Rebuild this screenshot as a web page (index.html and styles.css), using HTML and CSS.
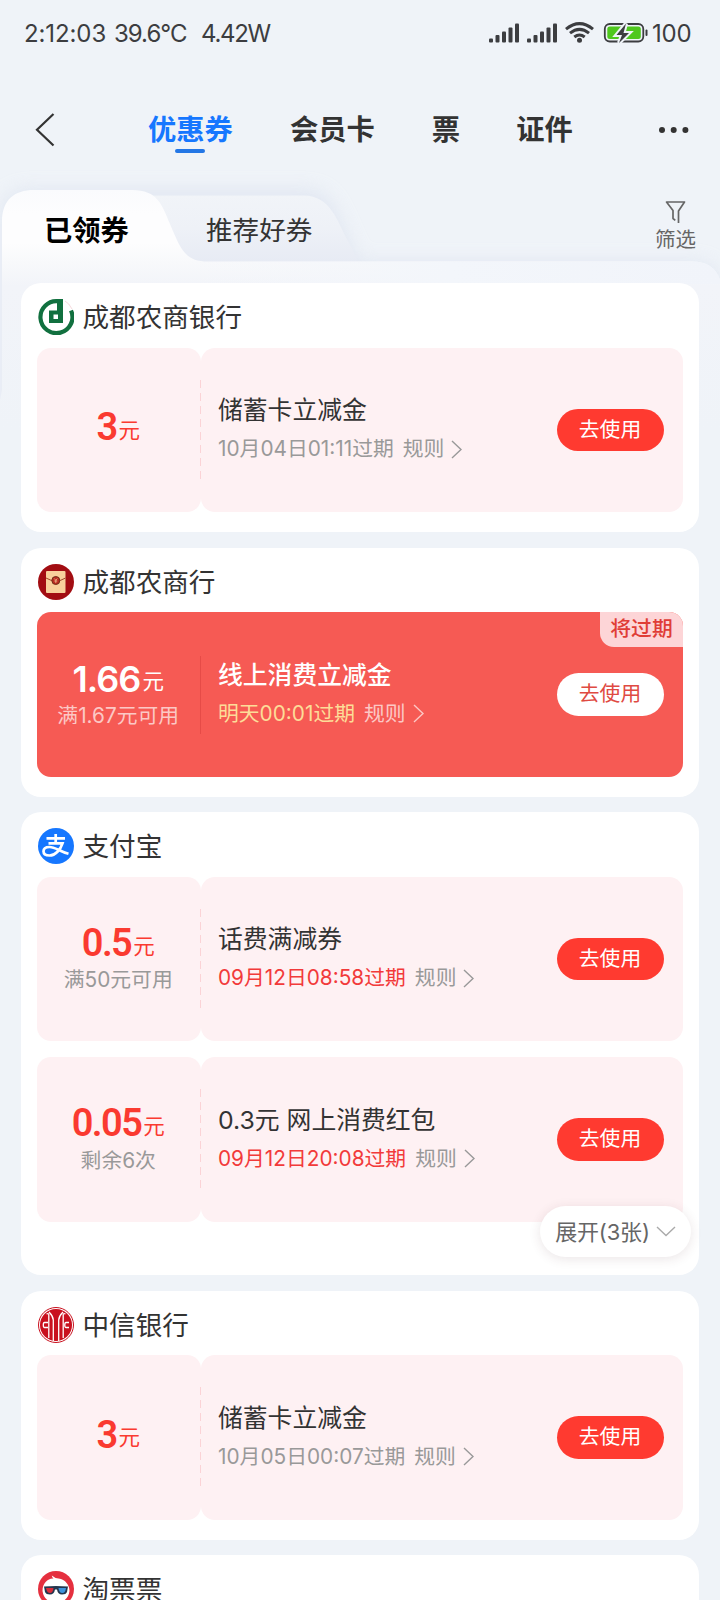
FILE: index.html
```html
<!DOCTYPE html>
<html lang="zh-CN">
<head>
<meta charset="utf-8">
<title>优惠券</title>
<link rel="stylesheet" href="styles.css">
</head>
<body>
<div class="screen">
  <header class="status">
    <span class="st-time">2:12:03</span><span class="st-temp">39.6°C</span><span class="st-watt">4.42W</span>
    <svg class="st-icons" width="164" height="24" viewBox="0 0 164 24">
      <g fill="#3c3d40">
        <rect x="1" y="16.500" width="4" height="4" rx="1"/><rect x="7.500" y="13" width="4" height="7.500" rx="1"/><rect x="14" y="9.500" width="4" height="11" rx="1"/><rect x="20.500" y="5.500" width="4" height="15" rx="1"/><rect x="27" y="1.500" width="4" height="19" rx="1"/>
        <rect x="39" y="16.500" width="4" height="4" rx="1"/><rect x="45.500" y="13" width="4" height="7.500" rx="1"/><rect x="52" y="9.500" width="4" height="11" rx="1"/><rect x="58.500" y="5.500" width="4" height="15" rx="1"/><rect x="65" y="1.500" width="4" height="19" rx="1"/>
        <circle cx="91.500" cy="18.300" r="2.500"/>
        <rect x="157.500" y="7.500" width="2" height="6.500" rx="1"/>
      </g>
      <g fill="none" stroke="#3c3d40" stroke-width="3">
        <path d="M78 7.200Q91.500-4 105 7.200"/><path d="M82 11.200Q91.500 3.500 101 11.200"/><path d="M86.300 15Q91.500 11 96.700 15"/>
      </g>
      <rect x="116.800" y="2" width="38.500" height="17.500" rx="5" fill="#eff3f8" stroke="#3c3d40" stroke-width="1.800"/>
      <rect x="119.300" y="4.500" width="33.500" height="12.500" rx="2.500" fill="#4fc81e"/>
      <path d="M138 1.500L128.500 13h5.500l-3 8 10-10h-5.500z" fill="#3c3d40" stroke="#eff3f8" stroke-width="4" paint-order="stroke"/>
    </svg>
    <span class="st-level">100</span>
  </header>

  <nav class="nav">
    <svg class="back" width="20" height="34" viewBox="0 0 20 34"><path d="M18.500 1L2 16.800 18.500 32.500" fill="none" stroke="#333" stroke-width="2.200"/></svg>
    <span class="nav-item nav-on">优惠券</span>
    <span class="nav-item">会员卡</span>
    <span class="nav-item">票</span>
    <span class="nav-item">证件</span>
    <svg class="more" width="32" height="8" viewBox="0 0 32 8" fill="#333"><circle cx="4" cy="4" r="3"/><circle cx="15.700" cy="4" r="3"/><circle cx="27.400" cy="4" r="3"/></svg>
  </nav>

  <section class="folder">
    <svg class="folder-bg" width="720" height="270" viewBox="0 170 720 270">
      <defs>
        <linearGradient id="gFront" gradientUnits="userSpaceOnUse" x1="0" y1="190" x2="0" y2="430">
          <stop offset="0" stop-color="#fafbfd"/><stop offset=".1" stop-color="#fdfdfe"/><stop offset=".22" stop-color="#fdfdfe"/><stop offset=".3" stop-color="#f8f9fb"/><stop offset=".4" stop-color="#f2f4f9"/><stop offset="1" stop-color="#eff3f8"/>
        </linearGradient>
        <linearGradient id="gStrip" gradientUnits="userSpaceOnUse" x1="180" y1="0" x2="720" y2="0">
          <stop offset="0" stop-color="#f5f7fb" stop-opacity="0"/><stop offset=".5" stop-color="#f3f6fb"/><stop offset="1" stop-color="#f1f4fa"/>
        </linearGradient>
        <linearGradient id="gBack" gradientUnits="userSpaceOnUse" x1="0" y1="195" x2="0" y2="262">
          <stop offset="0" stop-color="#f1f4f8"/><stop offset=".5" stop-color="#eef1f7"/><stop offset="1" stop-color="#e7ebf4"/>
        </linearGradient>
        <filter id="soft" x="-20%" y="-40%" width="140%" height="180%"><feGaussianBlur stdDeviation="9"/></filter>
      </defs>
      <g filter="url(#soft)" fill="#d9e0ee" opacity=".65">
        <path d="M2 430V218q0-28 28-28h275c30 0 30 26 54 72h335q20 0 26 20v148z"/>
      </g>
      <path d="M130 195.500H304C331 196 337 221 348 241Q353 250 358 262V275H130z" fill="url(#gBack)"/>
      <path d="M0 440V400L2 390V222C2 200 14 190 34 190H132C158 190 162 205 170 224C181 250 185 261.500 208 261.500H692Q714 261.500 720 280V440z" fill="url(#gFront)"/>
      <path d="M200 261.500H692Q714 261.500 720 280V284H200z" fill="url(#gStrip)"/>
    </svg>
    <span class="tab tab-on">已领券</span>
    <span class="tab">推荐好券</span>
    <div class="filter">
      <svg width="21" height="24" viewBox="0 0 21 24"><path d="M13.500 23V11L19.500 2H1.500L8 10.500V18.500L10.300 20.300" fill="none" stroke="#666" stroke-width="1.700" stroke-linejoin="round"/></svg>
      <span>筛选</span>
    </div>
  </section>

  <main class="list">
    <article class="card">
      <h2 class="head">
        <svg class="logo" viewBox="0 0 36 36"><path d="M33 11.500A16 16 0 1 1 20 2.200" fill="none" stroke="#11703f" stroke-width="4.200"/><path d="M19 0H25V24H11V11.500H19zM15.500 15.500V20H20V15.500z" fill="#11703f" fill-rule="evenodd"/><path d="M27 2Q31 4 34 10" stroke="#f0c9cf" fill="none" stroke-width=".7"/></svg>
        成都农商银行
      </h2>
      <div class="coupon">
        <div class="left"><p class="amount"><b>3</b>元</p></div>
        <div class="right">
          <div class="info"><h3>储蓄卡立减金</h3><p class="date"><span>10月04日01:11过期</span><i>规则</i><svg class="arr" viewBox="0 0 11 19"><path d="M1 1L10 9.500 1 18"/></svg></p></div>
          <a class="btn">去使用</a>
        </div>
      </div>
    </article>

    <article class="card">
      <h2 class="head">
        <svg class="logo" viewBox="0 0 36 36"><circle cx="18" cy="18" r="18" fill="#a20d12"/><rect x="8" y="7" width="19.500" height="22" rx="1" fill="#f8d09b"/><path d="M8 14Q18 20 27.500 14" fill="none" stroke="#a3472b"/><circle cx="17.800" cy="16.500" r="4" fill="#bb2a20" stroke="#703018"/><path d="M16.300 14.500L17.800 16.300 19.300 14.500M17.800 16.300V19M16.300 17H19.300" stroke="#f8d09b" stroke-width=".7" fill="none"/></svg>
        成都农商行
      </h2>
      <div class="coupon hot">
        <div class="left"><p class="amount wide"><b>1.66</b>元</p><p class="cond">满1.67元可用</p></div>
        <div class="right">
          <div class="info"><h3>线上消费立减金</h3><p class="date"><span>明天00:01过期</span><i>规则</i><svg class="arr" viewBox="0 0 11 19"><path d="M1 1L10 9.500 1 18"/></svg></p></div>
          <a class="btn">去使用</a>
        </div>
        <span class="tag">将过期</span>
      </div>
    </article>

    <article class="card tall">
      <h2 class="head">
        <svg class="logo" viewBox="0 0 36 36"><circle cx="18" cy="18" r="18" fill="#1677ff"/><g fill="none" stroke="#fff" stroke-width="2.700"><path d="M8.500 10.300H27M17.700 6V15.500M10.500 15.300H24.500C22.500 21.500 17.500 27.500 11.500 27.500C7.500 27.500 5.500 25.500 5.500 23.300C5.500 20.500 8 19 11.500 19C17 19 22 23.500 30.500 25.800"/></g></svg>
        支付宝
      </h2>
      <div class="coupon">
        <div class="left"><p class="amount"><b>0.5</b>元</p><p class="cond">满50元可用</p></div>
        <div class="right">
          <div class="info"><h3>话费满减券</h3><p class="date soon"><span>09月12日08:58过期</span><i>规则</i><svg class="arr" viewBox="0 0 11 19"><path d="M1 1L10 9.500 1 18"/></svg></p></div>
          <a class="btn">去使用</a>
        </div>
      </div>
      <div class="coupon">
        <div class="left loose"><p class="amount"><b>0.05</b>元</p><p class="cond">剩余6次</p></div>
        <div class="right">
          <div class="info"><h3>0.3元 网上消费红包</h3><p class="date soon"><span>09月12日20:08过期</span><i>规则</i><svg class="arr" viewBox="0 0 11 19"><path d="M1 1L10 9.500 1 18"/></svg></p></div>
          <a class="btn">去使用</a>
        </div>
      </div>
      <div class="expand"><span>展开(3张)</span><svg width="20" height="11" viewBox="0 0 20 11"><path d="M1 1L10 9.500 19 1" fill="none" stroke="#aaa" stroke-width="1.400"/></svg></div>
    </article>

    <article class="card">
      <h2 class="head">
        <svg class="logo" viewBox="0 0 36 36"><circle cx="18" cy="18" r="17.500" fill="#fff" stroke="#c9101e"/><circle cx="18" cy="18" r="16" fill="#c9101e"/><path d="M10.800 31V8Q11 6 8.500 7M25.200 31V8Q25 6 27.500 7M15.300 34V13Q15 9 11 5M20.700 34V13Q21 9 25 5M10 15.500H6.500Q5.300 15.500 5.300 18T6.500 20.500H10M31 15.500H28Q26.800 15.500 26.800 18T28 20.500H31" fill="none" stroke="#fff" stroke-width="1.300"/></svg>
        中信银行
      </h2>
      <div class="coupon">
        <div class="left"><p class="amount"><b>3</b>元</p></div>
        <div class="right">
          <div class="info"><h3>储蓄卡立减金</h3><p class="date"><span>10月05日00:07过期</span><i>规则</i><svg class="arr" viewBox="0 0 11 19"><path d="M1 1L10 9.500 1 18"/></svg></p></div>
          <a class="btn">去使用</a>
        </div>
      </div>
    </article>

    <article class="card">
      <h2 class="head">
        <svg class="logo" viewBox="0 0 36 36"><circle cx="18" cy="18" r="18" fill="#e5303f"/><path d="M4.500 20C4.500 12 10 7 15.500 7.500Q14 6.500 13.800 4.500Q16.500 7 20.500 7.500C27.500 8.500 31.500 14 31.500 20Q30 31 18 32Q6 31 4.500 20z" fill="#fff"/><path d="M6 15.500Q18 14.500 30 15.500L29 21Q28 23.500 24 23.500Q19.800 23.500 19 18.500H17Q16.200 23.500 12 23.500Q8 23.500 7 21z" fill="#24374f"/><path d="M8 17H15.500Q15 22 12 22Q8.800 22 8 17z" fill="#d92c38"/><path d="M20.500 17H28Q27.500 22 24.300 22Q21 22 20.500 17z" fill="#3f93dc"/></svg>
        淘票票
      </h2>
    </article>
  </main>
</div>
</body>
</html>
```
FILE: styles.css
```css
* { box-sizing: border-box; margin: 0; padding: 0; }
body { background: #eff3f8; }
.screen {
  width: 720px; height: 1600px; overflow: hidden; display: flex; flex-direction: column;
  font-family: Inter, "Noto Sans CJK SC", sans-serif; color: #333;
}
.screen > * { flex: none; }
h2, h3, i { font-weight: 400; font-style: normal; }

.status { height: 67px; padding: 0 28px 0 24px; display: flex; align-items: center; font-size: 24px; line-height: 30px; color: #3c3d40; white-space: nowrap; }
.st-time { width: 90px; letter-spacing: -.1px; }
.st-temp { width: 87px; letter-spacing: -1px; }
.st-watt { letter-spacing: -1.300px; }
.st-icons { margin-left: auto; }
.st-level { width: 40px; letter-spacing: -.2px; }

.nav { height: 123px; padding: 2px 30px 0 35px; display: flex; align-items: center; }
.back { margin-right: 93px; }
.nav-item { position: relative; margin-right: 57px; font-size: 28.300px; line-height: 40px; font-weight: 700; }
.nav-item:nth-of-type(3) { margin-right: 56px; }
.nav-on { color: #1677ff; }
.nav-on::after { content: ""; position: absolute; left: 27px; bottom: -3px; width: 30px; height: 3.500px; border-radius: 2px; background: #2376e5; }
.more { margin-left: auto; }

.folder { position: relative; height: 93px; padding: 0 24px 0 44px; display: flex; align-items: flex-start; }
.folder-bg { position: absolute; left: 0; top: -20px; z-index: -1; }
.tab { margin-top: 20px; width: 162px; font-size: 26.600px; line-height: 40px; white-space: nowrap; }
.tab-on { margin-top: 21px; font-size: 28.300px; font-weight: 700; color: #000; }
.filter { margin: 10px 0 0 auto; display: flex; flex-direction: column; align-items: center; font-size: 20.500px; line-height: 32px; color: #666; }

.list { padding: 0 21px; display: flex; flex-direction: column; gap: 15.500px; }
.card { position: relative; flex: none; height: 249px; padding: 16px 16px 0; border-radius: 20px; background: #fff; }
.tall { height: 463px; }
.head { height: 36px; margin-bottom: 12.500px; padding-left: 1px; display: flex; align-items: center; gap: 8.500px; font-size: 26.600px; line-height: 36px; }
.logo { width: 36px; height: 36px; flex: none; }

.coupon { position: relative; height: 164.500px; margin-bottom: 16px; display: flex; }
.coupon::after { content: ""; position: absolute; left: 163px; top: 32px; width: 1px; height: 104px; background: repeating-linear-gradient(#fbd3d6 0 8px, transparent 8px 13px); }
.left { width: 163.500px; padding-right: 1px; border-radius: 14px; background: #fef1f3; display: flex; flex-direction: column; justify-content: center; align-items: center; }
.right { flex: 1; border-radius: 14px; background: #fef1f3; display: flex; align-items: center; padding: 0 19.500px 0 17.500px; }
.amount { height: 45px; display: flex; align-items: center; font-size: 21.500px; line-height: 40px; color: #fa3a30; white-space: nowrap; }
.amount b { font: 600 38px/40px Roboto, sans-serif; letter-spacing: -1.600px; margin: 0 2px 5px 0; }
.amount.wide b { font: 600 36px/40px Inter, sans-serif; letter-spacing: -1px; margin-right: 2px; }
.cond { font-size: 20.800px; line-height: 28px; margin-top: -2px; color: #999; white-space: nowrap; }
.left.loose .cond { margin-top: -1px; }
.info { flex: 1; padding-bottom: 2px; white-space: nowrap; }
.info h3 { font-size: 24.800px; line-height: 36px; }
.date { margin-top: 5px; display: flex; align-items: center; font-size: 20.800px; line-height: 32px; color: #999; }
.date i { margin: 0 7px 0 9px; color: #999; }
.soon { color: #f23a3a; }
.arr { width: 11px; height: 19px; fill: none; stroke: #999; stroke-width: 1.400; }
.btn { width: 107px; height: 42.500px; border-radius: 22px; background: #ff3a30; color: #fff; font-size: 20.800px; line-height: 41px; text-align: center; }

.hot { border-radius: 14px; background: #f65a54; }
.hot .left, .hot .right { background: none; }
.hot::after { top: 44px; height: 78px; background: #e64b47; }
.hot .amount, .hot h3 { color: #fff; }
.hot h3 { font-weight: 500; }
.hot .cond, .hot .date i { color: #fcc8c5; }
.hot .date { color: #fddc98; }
.hot .arr { stroke: #fcc8c5; }
.hot .btn { background: #fff; color: #df4a42; }
.tag { position: absolute; right: 0; top: 0; width: 83px; height: 35px; border-radius: 0 14px 0 14px; background: #fdd5d7; color: #e03d36; font-size: 20.800px; font-weight: 500; line-height: 34px; text-align: center; }

.expand { position: absolute; right: 8px; bottom: 18px; width: 151px; height: 51px; border-radius: 26px; background: #fff; box-shadow: 0 2px 12px rgba(80, 40, 50, .12); display: flex; align-items: center; justify-content: center; gap: 6px; font-size: 22px; letter-spacing: -.2px; color: #666; white-space: nowrap; }
.expand span { padding-bottom: 4px; }
```
